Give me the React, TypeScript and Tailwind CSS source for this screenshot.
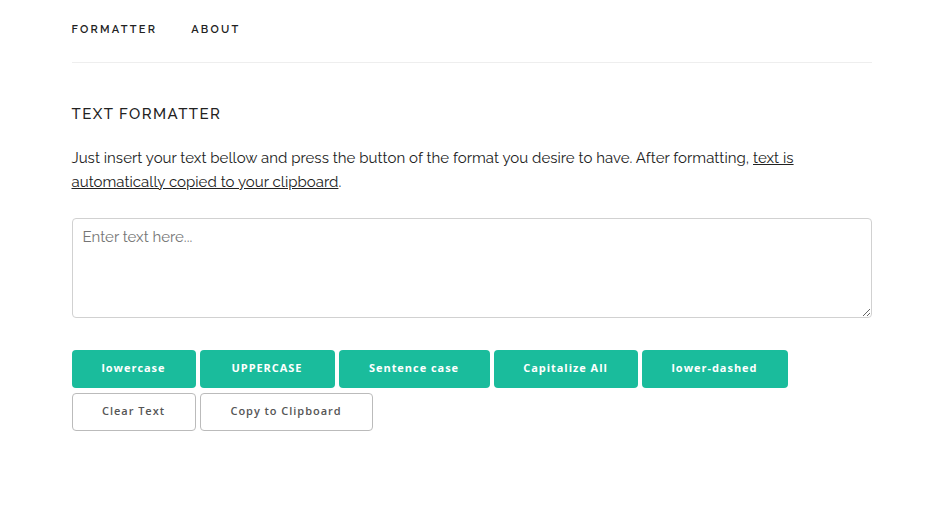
import { useState } from 'react'

const formats = [
  { label: 'lowercase', w: 'w-[124px]' },
  { label: 'UPPERCASE', w: 'w-[135px]' },
  { label: 'Sentence case', w: 'w-[151px]' },
  { label: 'Capitalize All', w: 'w-[144px]' },
  { label: 'lower-dashed', w: 'w-[146px]' },
]

export default function App() {
  const [text, setText] = useState('')

  return (
    <div className="min-h-screen bg-white text-[#222] font-['Raleway','Open_Sans',sans-serif]">
      <div className="mx-auto w-[800px]">
        <nav className="flex h-[63px] items-center gap-[34px] border-b border-[#eee] pb-[2px] text-[11px] font-semibold uppercase tracking-[0.14rem]">
          <a href="#">Formatter</a>
          <a href="#">About</a>
        </nav>

        <h1 className="mt-[40px] text-[15px] font-medium uppercase tracking-[0.09rem]">
          Text Formatter
        </h1>

        <p className="mt-[20px] text-[15px] leading-[24px] tracking-[0.002em]">
          Just insert your text bellow and press the button of the format you desire to have. After formatting,{' '}
          <a href="#" className="underline">text is automatically copied to your clipboard</a>.
        </p>

        <textarea
          value={text}
          onChange={(e) => setText(e.target.value)}
          placeholder="Enter text here..."
          className="mt-[24px] block h-[100px] w-full rounded-[4px] border border-[#d1d1d1] px-[10px] py-[7px] text-[15px] placeholder:text-[#757575] outline-none"
        />

        <div className="mt-[32px] flex flex-col gap-[5px] font-['Open_Sans',sans-serif] text-[11px] tracking-[0.06rem]">
          <div className="flex gap-[4px]">
            {formats.map((f) => (
              <button
                key={f.label}
                className={`${f.w} h-[38px] rounded-[4px] bg-[#1abc9c] font-bold text-white`}
              >
                {f.label}
              </button>
            ))}
          </div>
          <div className="flex gap-[4px]">
            <button className="w-[124px] h-[38px] rounded-[4px] border border-[#bbb] font-semibold text-[#555]">
              Clear Text
            </button>
            <button className="w-[173px] h-[38px] rounded-[4px] border border-[#bbb] font-semibold text-[#555]">
              Copy to Clipboard
            </button>
          </div>
        </div>
      </div>
    </div>
  )
}
